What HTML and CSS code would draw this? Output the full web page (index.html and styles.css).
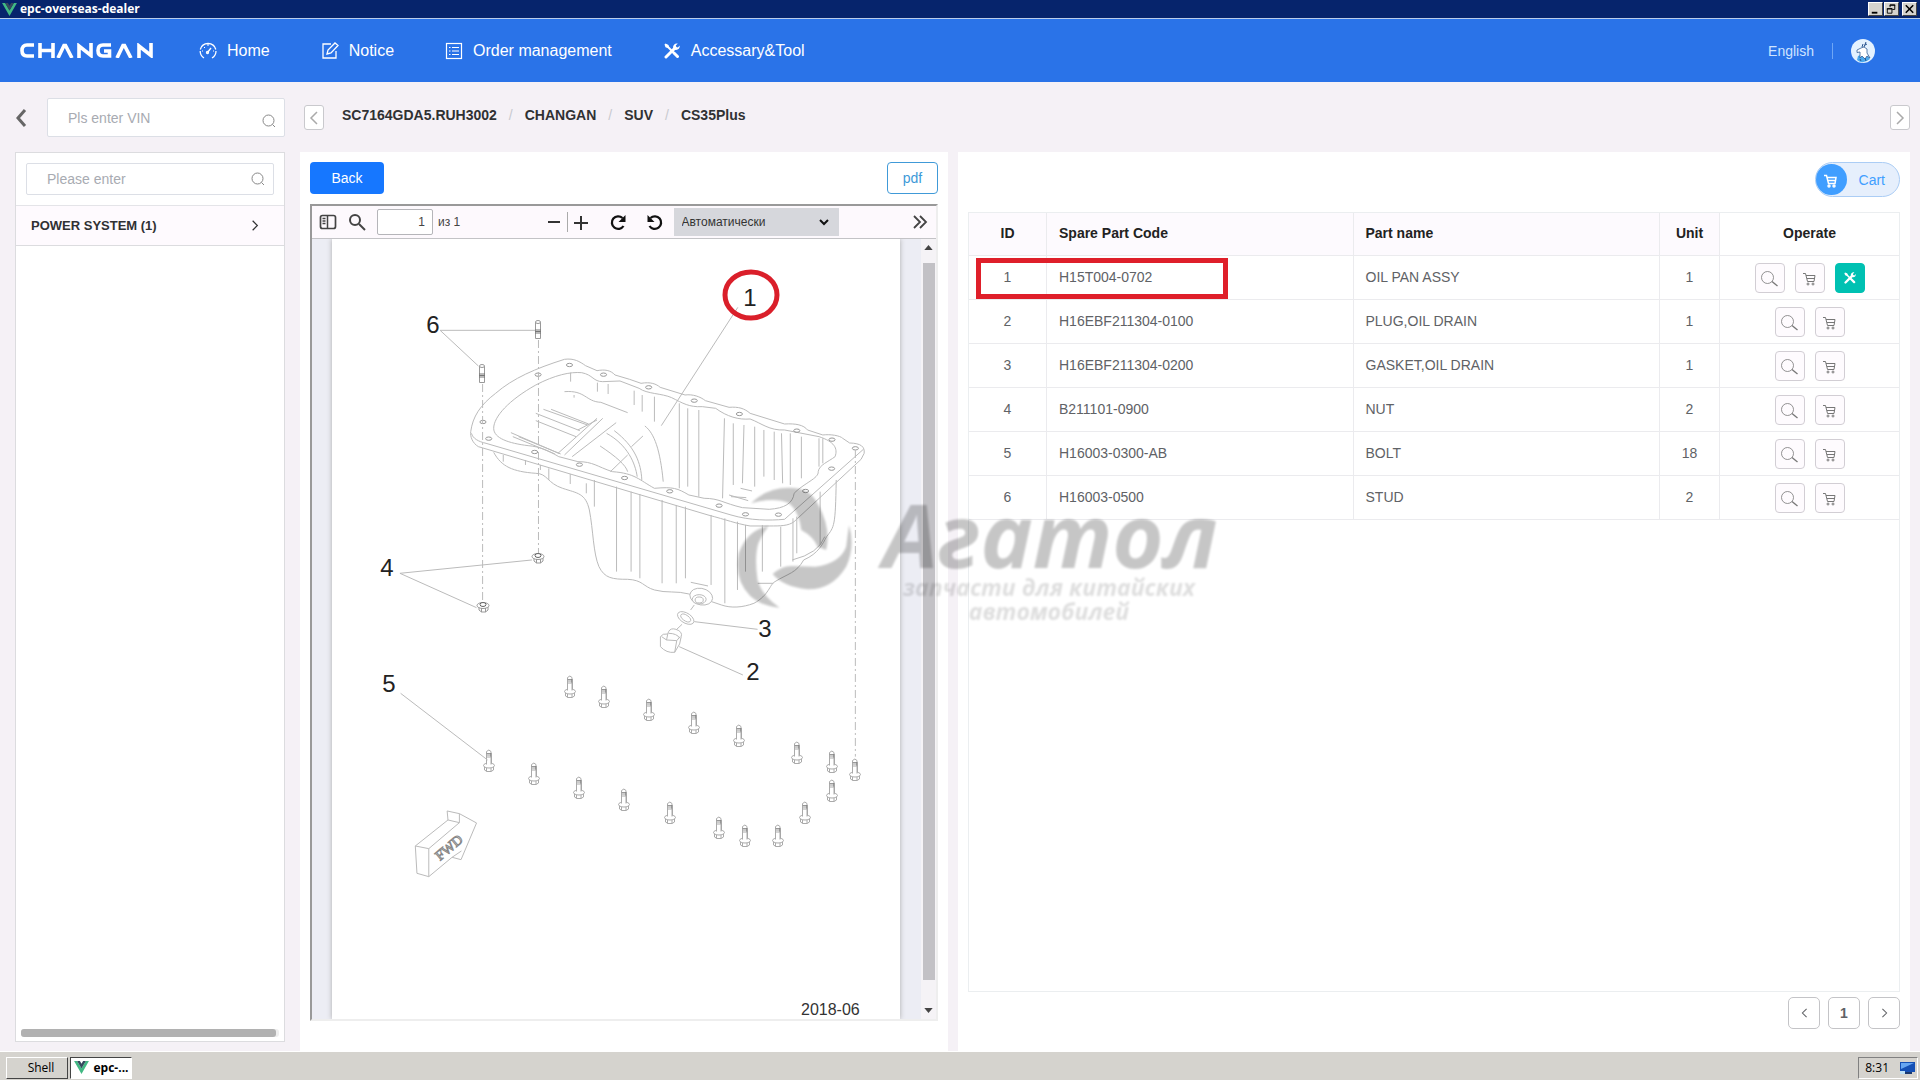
FILE: index.html
```html
<!DOCTYPE html>
<html lang="en">
<head>
<meta charset="utf-8">
<meta name="viewport" content="width=device-width, initial-scale=1">
<title>epc-overseas-dealer</title>
<link rel="stylesheet" href="styles.css">
</head>
<body>
<svg class="defs" aria-hidden="true">
  <symbol id="i-vue" viewBox="0 0 16 14"><path fill="#41b883" d="M0 0h3.300L8 8l4.700-8H16L8 14z"/><path fill="#35495e" d="M3.300 0h3L8 3l1.700-3h3L8 8z"/></symbol>
  <symbol id="i-search" viewBox="0 0 14 14"><g fill="none" stroke="currentColor"><circle cx="6.500" cy="6.500" r="5.500"/><path d="M10.500 10.500l2.500 2.500"/></g></symbol>
  <symbol id="i-left" viewBox="0 0 10 14"><path fill="none" stroke="currentColor" stroke-width="1.500" d="M8 1L2 7l6 6"/></symbol>
  <symbol id="i-right" viewBox="0 0 10 14"><path fill="none" stroke="currentColor" stroke-width="1.500" d="M2 1l6 6-6 6"/></symbol>
  <symbol id="i-zoom" viewBox="1 1 28 28"><g fill="none" stroke="currentColor"><circle cx="12.500" cy="14.500" r="6" stroke-width=".8"/><path stroke-width="1.300" d="M17 18.500l5.500 4.500"/></g></symbol>
  <symbol id="i-cart" viewBox="1 1 28 28"><g fill="none" stroke="currentColor"><path d="M8 10.500h2.500l2 8h6.500l1-6h-9M12 15.500h7.500"/><circle cx="13" cy="21" r="1"/><circle cx="18" cy="21" r="1"/></g></symbol>
  <symbol id="i-tools" viewBox="0 0 16 16"><path fill="none" stroke="currentColor" stroke-width="3" stroke-linecap="round" d="M2 14l8.500-8.500M10 10l3.500 3.500"/><path fill="none" stroke="currentColor" stroke-width="2" d="M2 2l8 8"/><path fill="currentColor" d="M.5 1.500l1-1 3 1.500.5 2-1.500 1-2-.8zM9 4.500C9 2 11 0 13.800.6L11.800 2.600l.6 1.400 1.400.6 2-2C16 5.500 14 7.300 11.500 7z"/></symbol>
  <symbol id="bolt" viewBox="0 0 14 24" overflow="visible"><g fill="#fff" stroke="#aaa"><path d="M4.500 15V2.500Q7 -.5 9 2.500V15"/><path d="M4.500 4.500H9M5 6H9" stroke="#999"/><path stroke="#777" d="M9 4v11"/><path d="M2.500 17v4l2.500 1.500h4l2.500-1.500v-4"/><ellipse cx="7" cy="16.500" rx="5.500" ry="2.500"/><path d="M4.500 19v3.500M9 19v3.500M4.500 15.500V8h4.500v7.500"/></g></symbol>
  <symbol id="stud" viewBox="0 0 8 20" overflow="visible"><g fill="#fff" stroke="#999"><path d="M1.500 2v16.500h5V2"/><ellipse cx="4" cy="2" rx="2.500" ry="1.500"/><path stroke="#777" d="M1 10h6M1 11.500h6M1 13h6"/></g></symbol>
  <symbol id="nut" viewBox="0 0 14 12" overflow="visible"><g fill="#fff" stroke="#999"><path d="M3 5v4l2.500 2h4L12 9V5"/><ellipse cx="7" cy="4.500" rx="6" ry="3"/><ellipse cx="7" cy="3.500" rx="3" ry="2" stroke="#666"/><path d="M5.500 7v4M9.500 7v4"/></g></symbol>
</svg>

<header class="titlebar">
  <svg class="vue"><use href="#i-vue"/></svg>
  <span class="titlebar-name">epc-overseas-dealer</span>
  <div class="winbuttons">
    <button aria-label="Minimize"><svg viewBox="0 0 14 12"><path d="M3 9h6v2H3z"/></svg></button>
    <button aria-label="Restore"><svg viewBox="0 0 14 12"><path fill="none" stroke="#000" d="M5.500 4V1.500h5v5H8M5 2h6M2.500 5.500h5v5h-5zM2 6h6"/></svg></button>
    <button class="close" aria-label="Close"><svg viewBox="0 0 14 12"><path fill="none" stroke="#000" stroke-width="1.700" d="M3 2l8 8M11 2l-8 8"/></svg></button>
  </div>
</header>

<nav class="navbar">
  <svg class="logo" viewBox="0 0 134 15" role="img" aria-label="CHANGAN"><g fill="none" stroke="#fff" stroke-width="3.600"><path d="M14 2H7Q2 2 2 7.500T7 13h7"/><path d="M20 0v15M33 0v15M20 7.500h13"/><path d="M38 15l6-12.500h1.500L52 15"/><path d="M59 15V3l12 9.500V0"/><path d="M91 2h-8q-5 0-5 5.500T83 13h6.500V8H84"/><path d="M97 15l6-12.500h1.500L111 15"/><path d="M119 15V3l12 9.500V0"/></g></svg>
  <a class="navlink" href="#"><svg viewBox="0 0 18 18"><g fill="none" stroke="currentColor" stroke-width="1.300"><path d="M5 16A8 8 0 0 1 1.200 9M1.300 7.500A8 8 0 0 1 16.800 7.500M17 9A8 8 0 0 1 13 16M8.500 10.500L12 6"/><circle cx="8.500" cy="10.500" r="1"/><path stroke-width="1" d="M9 2v2M3 9h1M14 9h1M5 5l1 1"/></g></svg>Home</a>
  <a class="navlink" href="#"><svg viewBox="0 0 18 18"><g fill="none" stroke="currentColor" stroke-width="1.300"><path d="M10 2H2v14h13V9M6 12l1-4 7-7 3 2.500-7 7.500z"/></g></svg>Notice</a>
  <a class="navlink" href="#"><svg viewBox="0 0 18 18"><g fill="none" stroke="currentColor" stroke-width="1.200"><rect x="1.500" y="1.500" width="15" height="15"/><path d="M4 5.500h1.500M4 9h1.500M4 12.500h1.500M7 5.500h7M7 9h7M7 12.500h7"/></g></svg>Order management</a>
  <a class="navlink" href="#"><svg viewBox="-1 -1 18 18"><use href="#i-tools" width="16" height="16"/></svg>Accessary&amp;Tool</a>
  <div class="account">
    <a class="lang" href="#">English</a>
    <span class="sep"></span>
    <svg class="avatar" viewBox="0 0 24 24" role="img" aria-label="Account"><circle cx="12" cy="12" r="12" fill="#e4f2ff"/><path fill="#4aa8ec" d="M7 17q5-3 10 0l2 3q-7 6-13 1z"/><path fill="#fff" stroke="#345f98" stroke-width=".8" d="M6 11l4-2 3-1 3 2v4l3 5-3-2-2 3-3-3-2 2v-6l-3 .5z"/><path fill="none" stroke="#27528d" d="M11 8l1-3M13 8l2-5M14 6l2-1"/><path stroke="#27528d" d="M9 20l1 2M14 19l1 3" /></svg>
  </div>
</nav>

<main class="workspace">
  <aside class="side">
    <div class="vinrow">
      <button class="goback" aria-label="Go back"><svg viewBox="0 0 12 18"><path fill="none" stroke="#666" stroke-width="3" d="M10 1L3 9l7 8"/></svg></button>
      <label class="field vin"><input type="text" aria-label="VIN" placeholder="Pls enter VIN"><svg><use href="#i-search"/></svg></label>
    </div>
    <div class="tree">
      <div class="treesearch"><label class="field"><input type="text" aria-label="Search system" placeholder="Please enter"><svg><use href="#i-search"/></svg></label></div>
      <a class="treeitem" href="#"><span>POWER SYSTEM (1)</span><svg><use href="#i-right"/></svg></a>
      <div class="hscroll"><div class="hthumb"></div></div>
    </div>
  </aside>

  <section class="content">
    <div class="crumbrow">
      <button class="step" aria-label="Previous"><svg><use href="#i-left"/></svg></button>
      <div class="crumbs"><a href="#">SC7164GDA5.RUH3002</a><i>/</i><a href="#">CHANGAN</a><i>/</i><a href="#">SUV</a><i>/</i><a href="#">CS35Plus</a></div>
      <button class="step" aria-label="Next"><svg><use href="#i-right"/></svg></button>
    </div>

    <div class="panels">
      <div class="panel drawing">
        <div class="panelhead"><button class="back">Back</button><button class="pdf">pdf</button></div>
        <div class="viewer">
          <div class="toolbar">
            <div class="group pages">
              <button aria-label="Sidebar"><svg viewBox="0 0 18 18"><rect x="1.500" y="2.500" width="15" height="13" rx="2" fill="none" stroke="#444" stroke-width="1.700"/><path stroke="#444" stroke-width="1.500" d="M8.500 2v14M3.500 5.500h3M3.500 8h3M3.500 10.500h3"/></svg></button>
              <button aria-label="Find"><svg viewBox="0 0 18 18"><g fill="none" stroke="#444" stroke-width="2"><circle cx="7" cy="7" r="5"/><path d="M11 11l6 6"/></g></svg></button>
              <input class="pageno" type="text" aria-label="Page" value="1">
              <span class="pagecount">из 1</span>
            </div>
            <div class="group">
              <button aria-label="Zoom out"><svg viewBox="0 0 18 18"><path stroke="#333" stroke-width="2" d="M3 9h12"/></svg></button>
              <span class="rule"></span>
              <button aria-label="Zoom in"><svg viewBox="0 0 18 18"><path stroke="#333" stroke-width="2" d="M2 10h14M9 3v14"/></svg></button>
              <button class="rot" aria-label="Rotate clockwise"><svg viewBox="0 0 18 18"><path fill="none" stroke="#111" stroke-width="2.300" d="M14.500 13a6.300 6.300 0 1 1-1-8"/><path fill="#111" d="M16.500 2v7h-7z"/></svg></button>
              <button class="rot" aria-label="Rotate counterclockwise"><svg viewBox="0 0 18 18"><path fill="none" stroke="#111" stroke-width="2.300" d="M3.500 13a6.300 6.300 0 1 0 1-8"/><path fill="#111" d="M1.500 2v7h7z"/></svg></button>
              <div class="zoomsel"><select aria-label="Zoom"><option>Автоматически</option></select><svg viewBox="0 0 10 8"><path fill="none" stroke="#111" stroke-width="2" d="M1 2l4 4 4-4"/></svg></div>
            </div>
            <button aria-label="More tools"><svg viewBox="0 0 18 18"><path fill="none" stroke="#444" stroke-width="1.800" d="M3 3l6 6-6 6M9 3l6 6-6 6"/></svg></button>
          </div>
          <div class="viewbody">
            <div class="pagewrap">
            <svg class="sheet" viewBox="332 239 568 780" role="img" aria-label="Oil pan exploded drawing">
              <rect x="332" y="239" width="568" height="782" fill="#fff"/>
              <!-- oil pan -->
              <g class="ink" transform="translate(310 270) scale(.3827 .3333)">
                <path d="M420 485C425 440 445 405 485 370C530 325 590 295 665 268C690 264 705 275 720 287L750 302C770 298 785 300 797 315L835 328L865 340C890 335 905 342 915 352L980 375C1000 372 1020 380 1033 392L1095 412C1120 410 1135 415 1150 430L1240 462C1270 460 1290 465 1300 480L1340 495C1360 492 1385 497 1392 505L1410 519C1440 520 1450 530 1448 550L1440 568L1265 755C1250 768 1230 768 1200 768H1150C1110 760 1090 750 1040 735L440 530C425 520 418 500 420 485Z"/>
                <path d="M422 490C425 505 440 515 460 520L1100 735C1150 752 1200 752 1240 748L1446 538"/>
                <path d="M480 475C480 440 520 390 590 345C640 315 680 305 710 308C740 315 740 335 765 335L810 333L860 355C880 372 920 370 945 383C975 400 990 412 1025 410L1060 415C1090 440 1120 450 1150 447C1180 460 1200 482 1240 480L1330 500C1370 515 1380 535 1372 560C1355 575 1330 585 1328 605C1330 625 1290 640 1265 670C1262 700 1240 715 1200 718L1130 713C1080 700 1070 685 1030 685L990 675C960 655 950 650 900 655C860 630 850 610 790 605C750 590 740 575 700 575L650 560C620 540 600 530 570 527C520 520 480 505 480 475Z"/>
                <path d="M480 547C500 590 530 605 590 610C620 610 620 640 660 655C700 670 720 670 730 720C740 780 740 850 755 890C770 925 790 928 830 928C870 930 870 950 900 960C930 970 960 962 990 972L1075 1005C1100 1015 1130 1013 1160 1000C1200 975 1200 945 1215 935C1250 910 1270 910 1290 870C1330 850 1340 820 1350 800C1370 770 1373 770 1375 630"/>
                <path d="M1170 940H1210M1260 870Q1330 850 1345 800M505 555v20M563 570v15M602 585v15M624 595v35M680 612v30M722 640v30M743 630v80M801 650v255M839 665v240M862 672V925M920 690V940M957 705V940M981 710V925M1048 735V945M1084 745V1000M1117 755V960M1138 765V905M1182 765V905M1230 770V890M1262 745V875M1333 665V825M1272 740V850"/>
                <path d="M965 400V655M987 415V650M1016 420V680M1083 445L1078 685M1106 460V645M1134 465L1130 640M1162 470V650M1186 480V620M1213 485V630M1232 490L1235 640M1255 490V645M1284 500V625M1330 505V590M900 380V455M868 375V425M847 362V405M779 342V372M751 338V365M681 308V335M1340 505V580"/>
                <path d="M665 365C720 360 720 395 760 397L830 428M690 375v8M875 468C900 490 915 540 923 635M590 430L705 482M590 452L695 500M610 418L725 465M630 418L728 462M525 488L650 550M545 500L655 552M530 500L640 552M795 482C850 530 865 580 867 630M775 490C830 525 850 580 855 620M758 528C800 560 825 585 830 605M648 550L750 445M665 555L765 445M685 560L800 458M700 480L750 450M870 498L840 530M830 555L785 605M1095 675L1145 692M1100 680L1140 683M1125 655L1155 663M995 937L1040 948"/>
                <g class="holes"><ellipse cx="678" cy="285" rx="8" ry="5"/><ellipse cx="596" cy="314" rx="8" ry="5"/><ellipse cx="767" cy="314" rx="8" ry="5"/><ellipse cx="885" cy="352" rx="8" ry="5"/><ellipse cx="1004" cy="392" rx="8" ry="5"/><ellipse cx="1122" cy="432" rx="8" ry="5"/><ellipse cx="1272" cy="482" rx="8" ry="5"/><ellipse cx="1364" cy="509" rx="8" ry="5"/><ellipse cx="1425" cy="535" rx="8" ry="5"/><ellipse cx="1363" cy="596" rx="8" ry="5"/><ellipse cx="1295" cy="663" rx="8" ry="5"/><ellipse cx="1224" cy="734" rx="8" ry="5"/><ellipse cx="1138" cy="733" rx="8" ry="5"/><ellipse cx="1069" cy="707" rx="8" ry="5"/><ellipse cx="940" cy="664" rx="8" ry="5"/><ellipse cx="822" cy="624" rx="8" ry="5"/><ellipse cx="704" cy="584" rx="8" ry="5"/><ellipse cx="587" cy="546" rx="8" ry="5"/><ellipse cx="467" cy="506" rx="8" ry="5"/><ellipse cx="452" cy="456" rx="8" ry="5"/></g>
                <path d="M340 181H590M340 181L440 288M1118 112L918 467M235 910L580 870M235 910L435 1013"/>
                <path class="axis" d="M597 210V850M451 342V995M1425 540V1460"/>
              </g>
              <!-- drain boss, washer and plug -->
              <g class="ink" transform="translate(640 440) scale(.4082 .3333)">
                <g fill="#fff"><ellipse cx="150" cy="470" rx="29" ry="24" transform="rotate(30 150 470)"/><ellipse cx="145" cy="478" rx="17" ry="14"/><ellipse cx="145" cy="480" rx="10" ry="9"/>
                <ellipse cx="112" cy="534" rx="24" ry="14" transform="rotate(42 112 534)"/><ellipse cx="112" cy="534" rx="15" ry="8" transform="rotate(42 112 534)"/>
                <path d="M70 575Q75 563 88 568Q105 575 101 590L97 612L85 637Q65 640 50 620V590Q55 580 68 582Z"/></g>
                <path d="M53 590L65 600L90 602L98 590M65 600L68 582M90 602L85 637M70 580Q90 580 98 595M133 495L124 510M103 553L90 568M133 545L288 568M96 620L252 705"/>
              </g>
              <use href="#stud" x="534" y="320" width="8" height="20"/>
              <use href="#stud" x="478" y="364" width="8" height="20"/>
              <use href="#nut" x="531" y="552" width="14" height="12"/>
              <use href="#nut" x="476" y="601" width="14" height="12"/>
              <g>
                <use href="#bolt" x="563" y="675" width="14" height="24"/><use href="#bolt" x="597" y="685" width="14" height="24"/><use href="#bolt" x="642" y="698" width="14" height="24"/><use href="#bolt" x="687" y="711" width="14" height="24"/><use href="#bolt" x="732" y="724" width="14" height="24"/><use href="#bolt" x="790" y="741" width="14" height="24"/><use href="#bolt" x="825" y="750" width="14" height="24"/><use href="#bolt" x="848" y="758" width="14" height="24"/><use href="#bolt" x="825" y="779" width="14" height="24"/><use href="#bolt" x="798" y="801" width="14" height="24"/><use href="#bolt" x="771" y="824" width="14" height="24"/><use href="#bolt" x="738" y="824" width="14" height="24"/><use href="#bolt" x="712" y="816" width="14" height="24"/><use href="#bolt" x="663" y="801" width="14" height="24"/><use href="#bolt" x="617" y="788" width="14" height="24"/><use href="#bolt" x="572" y="776" width="14" height="24"/><use href="#bolt" x="527" y="762" width="14" height="24"/><use href="#bolt" x="482" y="749" width="14" height="24"/>
              </g>
              <!-- direction arrow -->
              <g class="ink" transform="translate(310 640) scale(.4082 .3333)"><path d="M222 160L435 360M258 618L338 540L336 513L366 521L408 549L370 659L348 652L371 633M258 618L291 626V710L262 700ZM291 626L366 548L338 540M366 548V521M291 710L348 652"/></g>
              <text class="fwd" x="440" y="861" transform="rotate(-40 440 861)">FWD</text>
              <g class="callout"><text x="433" y="333">6</text><text x="750" y="306">1</text><text x="387" y="576">4</text><text x="765" y="637">3</text><text x="753" y="680">2</text><text x="389" y="692">5</text></g>
              <text class="date" x="801" y="1015">2018-06</text>
              <ellipse cx="751" cy="295" rx="26" ry="23" fill="none" stroke="#da1f2a" stroke-width="5"/>
            </svg>
            </div>
            <div class="vscroll"><svg viewBox="0 0 10 6"><path d="M5 0l5 6H0z"/></svg><div class="vtrack"><div class="vthumb"></div></div><svg viewBox="0 0 10 6"><path d="M0 0h10L5 6z"/></svg></div>
          </div>
        </div>
      </div>

      <div class="panel parts">
        <div class="panelhead carthead"><button class="cart"><span><svg><use href="#i-cart"/></svg></span>Cart</button></div>
        <div class="tablebox">
          <table>
            <colgroup><col class="c-id"><col><col><col class="c-unit"><col class="c-op"></colgroup>
            <thead><tr><th class="mid">ID</th><th>Spare Part Code</th><th>Part name</th><th class="mid">Unit</th><th class="mid plain">Operate</th></tr></thead>
            <tbody>
              <tr><td class="mid first"><span class="mark"></span>1</td><td>H15T004-0702</td><td>OIL PAN ASSY</td><td class="mid">1</td><td class="opcell"><div class="ops"><button aria-label="View"><svg><use href="#i-zoom"/></svg></button><button aria-label="Add to cart"><svg><use href="#i-cart"/></svg></button><button class="tool" aria-label="Tools"><svg><use href="#i-tools"/></svg></button></div></td></tr>
              <tr><td class="mid">2</td><td>H16EBF211304-0100</td><td>PLUG,OIL DRAIN</td><td class="mid">1</td><td class="opcell"><div class="ops"><button aria-label="View"><svg><use href="#i-zoom"/></svg></button><button aria-label="Add to cart"><svg><use href="#i-cart"/></svg></button></div></td></tr>
              <tr><td class="mid">3</td><td>H16EBF211304-0200</td><td>GASKET,OIL DRAIN</td><td class="mid">1</td><td class="opcell"><div class="ops"><button aria-label="View"><svg><use href="#i-zoom"/></svg></button><button aria-label="Add to cart"><svg><use href="#i-cart"/></svg></button></div></td></tr>
              <tr><td class="mid">4</td><td>B211101-0900</td><td>NUT</td><td class="mid">2</td><td class="opcell"><div class="ops"><button aria-label="View"><svg><use href="#i-zoom"/></svg></button><button aria-label="Add to cart"><svg><use href="#i-cart"/></svg></button></div></td></tr>
              <tr><td class="mid">5</td><td>H16003-0300-AB</td><td>BOLT</td><td class="mid">18</td><td class="opcell"><div class="ops"><button aria-label="View"><svg><use href="#i-zoom"/></svg></button><button aria-label="Add to cart"><svg><use href="#i-cart"/></svg></button></div></td></tr>
              <tr><td class="mid">6</td><td>H16003-0500</td><td>STUD</td><td class="mid">2</td><td class="opcell"><div class="ops"><button aria-label="View"><svg><use href="#i-zoom"/></svg></button><button aria-label="Add to cart"><svg><use href="#i-cart"/></svg></button></div></td></tr>
            </tbody>
          </table>
        </div>
        <div class="pager"><button aria-label="Previous page"><svg><use href="#i-left"/></svg></button><button>1</button><button aria-label="Next page"><svg><use href="#i-right"/></svg></button></div>
      </div>
    </div>
  </section>

  <svg class="watermark" viewBox="730 480 500 160" aria-hidden="true">
    <g transform="translate(640 440) scale(.4082 .3333)"><path d="M272 190Q310 143 365 143Q410 143 430 180Q470 260 456 330L435 320Q425 290 395 270Q390 215 365 190Q330 170 272 190ZM315 258Q262 270 242 340Q230 420 270 468Q300 500 342 503Q300 470 288 420Q280 350 290 310Q300 280 315 258ZM512 255Q528 320 505 380Q470 450 410 448Q350 440 325 402Q350 375 375 378L430 380Q490 370 505 320Z"/></g>
    <text class="wm-name" x="883" y="568">Агатол</text>
    <g class="wm-sub"><text x="1049" y="596">запчасти для китайских</text><text x="1049" y="620">автомобилей</text></g>
  </svg>
</main>

<footer class="taskbar">
  <button class="task">Shell</button>
  <button class="task active"><svg class="vue"><use href="#i-vue"/></svg>epc-...</button>
  <div class="tray"><span>8:31</span><svg viewBox="0 0 16 14"><path fill="#1550b5" d="M1 1h15v10H1z"/><path fill="#66a6f2" d="M2 2h13L2 8z"/><path fill="#bde0f5" d="M1 10h5v3H1z"/><path fill="#1b3970" d="M6 11h7v2H6z"/></svg></div>
</footer>
</body>
</html>
```
FILE: styles.css
```css
* { box-sizing: border-box; }
body { margin: 0; min-height: 100vh; display: flex; flex-direction: column; background: #f5f1f6; color: #606266; font: 14px/20px "Liberation Sans", Arial, sans-serif; }
button, input, select { font: inherit; color: inherit; margin: 0; padding: 0; }
button { border: 0; background: none; display: flex; align-items: center; justify-content: center; }
a { color: inherit; text-decoration: none; }
svg { display: block; flex: none; }
.defs { position: absolute; width: 0; height: 0; }

/* window title */
.titlebar { height: 19px; display: flex; align-items: center; padding: 0 3px 0 2px; gap: 3px; background: #06246c; border-bottom: 1px solid #b9cdea; color: #fff; font: bold 12px/18px "Open Sans", "Noto Sans", sans-serif; }
.vue { width: 15px; height: 13px; }
.winbuttons { margin-left: auto; display: flex; gap: 1px; }
.winbuttons button { width: 15px; height: 14px; background: #d5d3ce; border: 1px solid; border-color: #fff #444 #444 #fff; }
.winbuttons svg { width: 13px; height: 12px; }
.winbuttons .close { margin-left: 2px; }

/* main navigation */
.navbar { height: 63px; display: flex; align-items: center; padding: 0 45px 0 20px; background: #2a73e8; color: #fff; font-size: 16px; }
.logo { width: 134px; height: 15px; margin-right: 45px; }
.navlink { display: flex; align-items: center; gap: 10px; margin-right: 51px; }
.navlink svg { width: 18px; height: 18px; }
.account { margin-left: auto; display: flex; align-items: center; gap: 18px; font-size: 14px; color: #cfe4ff; }
.sep { width: 1px; height: 16px; background: #6ea6f5; }
.avatar { width: 24px; height: 24px; }

/* left column */
.workspace { flex: 1; display: flex; gap: 15px; padding: 0 10px 0 15px; position: relative; }
.side { width: 270px; flex: none; display: flex; flex-direction: column; padding-bottom: 9px; }
.vinrow { height: 70px; display: flex; align-items: flex-start; justify-content: space-between; padding-top: 16px; }
.goback { height: 39px; }
.goback svg { width: 12px; height: 18px; }
.field { display: flex; align-items: center; height: 32px; padding: 0 8px 0 20px; background: #fff; border: 1px solid #dcdfe6; border-radius: 2px; }
.field input { flex: 1; min-width: 0; border: 0; outline: 0; background: none; }
.field input::placeholder { color: #a8abb2; opacity: 1; }
.field svg { width: 14px; height: 14px; color: #888; }
.vin { width: 238px; height: 39px; }
.vin svg { margin-top: 6px; }
.tree { flex: 1; display: flex; flex-direction: column; background: #fff; border: 1px solid #dcdcdf; }
.treesearch { padding: 10px; border-bottom: 1px solid #e4e4e8; }
.treeitem { height: 40px; display: flex; align-items: center; justify-content: space-between; padding: 0 25px 0 15px; background: #fefafe; border-bottom: 1px solid #dcdcdf; color: #303133; font-weight: bold; font-size: 13px; }
.treeitem svg { width: 8px; height: 11px; }
.hscroll { margin: auto 5px 4px; height: 8px; background: #eee; border-radius: 3px; }
.hthumb { width: 99%; height: 8px; background: #b1b1b1; border-radius: 3px; }

/* breadcrumbs */
.content { flex: 1; min-width: 0; display: flex; flex-direction: column; }
.crumbrow { height: 70px; display: flex; align-items: flex-start; padding: 23px 0 0 4px; }
.step { width: 20px; height: 25px; flex: none; background: #fff; border: 1px solid #c9c9cd; border-radius: 3px; color: #aaa; }
.step svg { width: 10px; height: 14px; }
.crumbs { flex: 1; margin-left: 18px; display: flex; color: #303133; font-weight: bold; }
.crumbs i { margin: 0 12px; color: #c8cad0; font-weight: normal; font-style: normal; }

/* panels */
.panels { flex: 1; display: grid; grid-template-columns: 648fr 952fr; gap: 10px; }
.panel { min-width: 0; display: flex; flex-direction: column; padding: 10px; background: #fff; }
.panelhead { display: flex; justify-content: space-between; margin-bottom: 10px; }
.drawing { padding-bottom: 30px; }
.back { width: 74px; height: 32px; background: #1677ff; color: #fff; border-radius: 4px; }
.pdf { width: 51px; height: 32px; border: 1px solid #409ad8; border-radius: 4px; color: #409ad8; }

/* document viewer */
.viewer { flex: 1; display: flex; flex-direction: column; border: 2px solid; border-color: #999 #eee #eee #999; }
.toolbar { height: 33px; display: flex; align-items: center; justify-content: space-between; padding: 0 7px; background: #fdf9fd; border-bottom: 1px solid #c3c3c6; color: #444; font-size: 12px; }
.toolbar svg { width: 18px; height: 18px; }
.group { display: flex; align-items: center; }
.pages { gap: 11px; }
.pageno { width: 56px; height: 26px; padding-right: 7px; border: 1px solid #b5b5b9; border-radius: 2px; background: #fff; text-align: right; }
.pagecount { width: 34px; margin-left: -6px; }
.rule { width: 1px; height: 20px; margin: 0 4px; background: #aaa; }
.rot { margin-left: 19px; }
.zoomsel { position: relative; margin-left: 10px; }
.zoomsel select { appearance: none; width: 165px; height: 28px; padding: 0 8px; background: #d6d7dc; border: 0; border-radius: 0; color: #333; }
.toolbar .zoomsel svg { position: absolute; right: 10px; top: 10px; width: 10px; height: 8px; }
.viewbody { flex: 1; display: flex; background: #ecedf4; overflow: hidden; }
.pagewrap { flex: 1; min-width: 0; padding: 0 21px 0 20px; }
.sheet { width: 100%; height: auto; box-shadow: 0 0 5px #aaa; }
.vscroll { width: 15px; display: flex; flex-direction: column; align-items: center; padding: 6px 0; background: #f5f3f6; }
.vscroll svg { width: 9px; height: 5px; fill: #444; }
.vtrack { flex: 1; width: 12px; margin: 13px 0 6px; }
.vthumb { width: 12px; height: 97%; background: #c2c1c5; }
.ink { fill: none; stroke: #bbb; }
.ink path, .ink ellipse { vector-effect: non-scaling-stroke; }
.ink .axis { stroke: #bbb; stroke-dasharray: 8 3 2 3; }
.holes { stroke: #999; }
.callout text { fill: #222; font-size: 24px; text-anchor: middle; }
.date { fill: #333; font-size: 16px; }
.fwd { fill: #fff; stroke: #888; font: 14px "Liberation Serif", serif; }

/* parts table */
.carthead { justify-content: flex-end; margin-bottom: 15px; }
.cart { width: 85px; height: 35px; gap: 12px; padding-right: 14px; background: #e6effc; border: 1px solid #abcdf5; border-radius: 18px; color: #409eff; }
.cart span { width: 31px; height: 31px; border-radius: 50%; background: #409eff; color: #fff; display: flex; align-items: center; justify-content: center; }
.cart svg { width: 28px; height: 28px; stroke-width: 1.500; }
.tablebox { flex: 1; border: 1px solid #ebeef0; }
table { width: 100%; table-layout: fixed; border-collapse: separate; border-spacing: 0; }
.c-id { width: 78px; }
.c-unit { width: 60px; }
.c-op { width: 179px; }
th, td { padding: 0 12px 2px; text-align: left; border-right: 1px solid #ebebee; border-bottom: 1px solid #ebebee; }
th:last-child, td:last-child { border-right: 0; }
th { height: 43px; background: #fdfafe; color: #222; }
.plain { background: #fff; }
td { height: 44px; }
.mid { text-align: center; }
.opcell { padding-bottom: 0; }
.first { position: relative; }
.mark { position: absolute; left: 7px; top: 2px; width: 252px; height: 41px; border: 5px solid #df1f2a; }
.ops { display: flex; gap: 10px; justify-content: center; }
.ops button { width: 30px; height: 30px; border: 1px solid #d2ced4; border-radius: 4px; background: #fefbfe; color: #777; }
.ops svg { width: 28px; height: 28px; }
.ops .tool { background: #00c1b2; border-color: #00c1b2; color: #fff; }
.ops .tool svg { width: 12px; height: 12px; }
.pager { display: flex; justify-content: flex-end; gap: 8px; padding: 5px 0 12px; }
.pager button { width: 32px; height: 32px; border: 1px solid #c4c4c7; border-radius: 5px; font-weight: bold; }
.pager svg { width: 7px; height: 10px; }

/* watermark over both panels */
.watermark { position: absolute; left: 730px; top: 398px; width: 500px; height: 160px; fill: #000; opacity: .22; pointer-events: none; filter: blur(1px); }
.wm-name { font: italic bold 88px "Open Sans", sans-serif; }
.wm-sub { font: italic bold 23px "Open Sans", sans-serif; text-anchor: middle; opacity: .6; }

/* desktop task bar */
.taskbar { height: 29px; display: flex; align-items: center; gap: 2px; padding: 3px 2px 0 6px; background: #d5d3ce; border-top: 1px solid #fff; color: #000; font: 12px/16px "Open Sans", sans-serif; }
.task { width: 62px; height: 22px; padding-left: 8px; border: 1px solid; border-color: #fff #444 #444 #fff; }
.active { padding: 0; gap: 5px; background: #fff; border-color: #444 #fff #fff #444; font-weight: bold; }
.tray { margin-left: auto; width: 60px; height: 22px; display: flex; align-items: center; justify-content: flex-end; gap: 10px; padding-right: 2px; border: 1px solid; border-color: #808080 #fff #fff #808080; }
.tray svg { width: 16px; height: 14px; }
```
